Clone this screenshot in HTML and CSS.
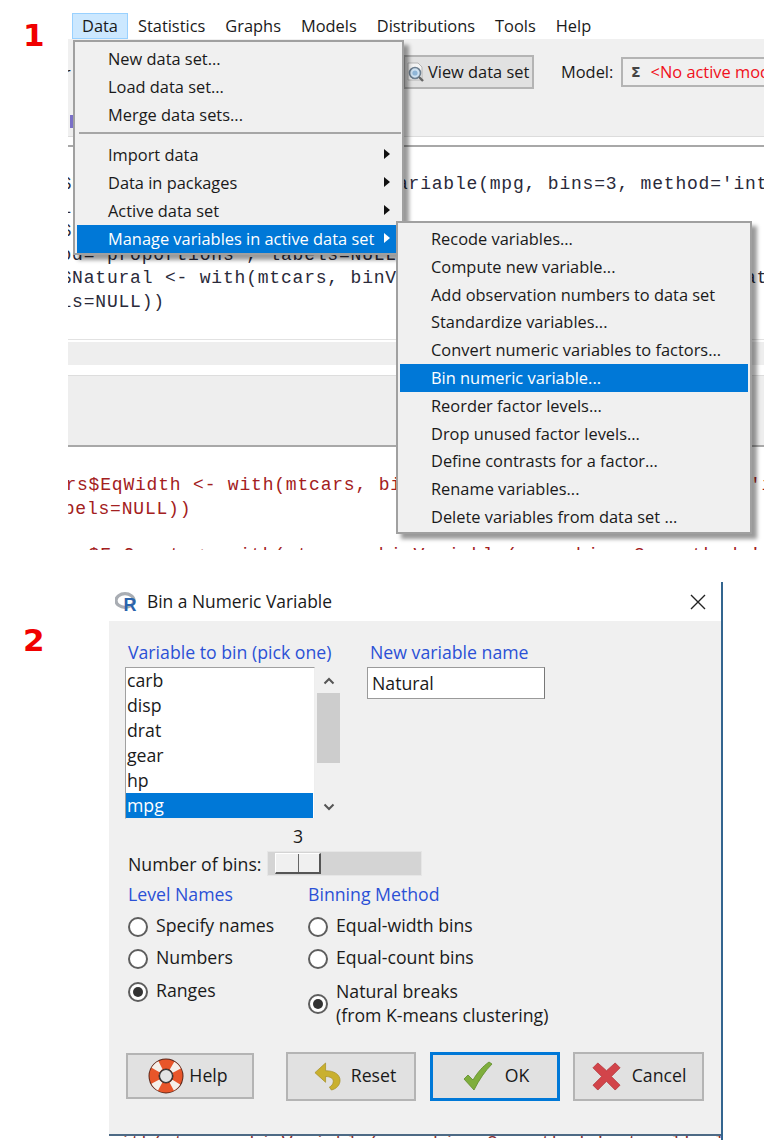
FILE: index.html
```html
<!DOCTYPE html>
<html lang="en">
<head>
<meta charset="utf-8">
<title>Bin a Numeric Variable</title>
<link rel="stylesheet" href="styles.css">
</head>
<body>
<section class="shot">
  <div class="gutter"><div class="numeral">1</div></div>
  <div class="app">
    <nav class="menubar">
      <span class="top active">Data</span>
      <span class="top">Statistics</span>
      <span class="top">Graphs</span>
      <span class="top">Models</span>
      <span class="top">Distributions</span>
      <span class="top">Tools</span>
      <span class="top">Help</span>
    </nav>
    <div class="toolbar">
      <div class="tool-row">
        <span class="cut-label">r</span>
        <button class="view-btn">
          <svg class="view-icon" viewBox="0 0 20 24"><path d="M3 3h10l4 4v13H3z" fill="#f4f4f4" stroke="#b5b5b5"/><circle cx="10" cy="13" r="5.5" fill="#cfe2f2" stroke="#6d7f90" stroke-width="1.6"/><circle cx="10" cy="13" r="2.6" fill="#8fb6d8"/><path d="M14 17l4 4" stroke="#666" stroke-width="2.4"/></svg>
          <span class="lift">View data set</span>
        </button>
        <span class="model-label lift">Model:</span>
        <div class="combo">
          <span class="sigma">Σ</span>
          <span class="no-model lift">&lt;No active model&gt;</span>
        </div>
      </div>
      <span class="cut-mark"></span>
    </div>
    <div class="white-gap"></div>
    <div class="pane code-top">
      <div class="line">$EqWidth &lt;- with(mtcars, binVariable(mpg, bins=3, method='intervals',</div>
      <div class="line">ls=NULL))</div>
      <div class="line">$EqCount &lt;- with(mtcars, binVariable(mpg, bins=3, meth</div>
      <div class="line">od='proportions', labels=NULL))</div>
      <div class="line">$Natural &lt;- with(mtcars, binVariable(mpg, bins=3, method='natural',</div>
      <div class="line">ls=NULL))</div>
    </div>
    <div class="strip-thin"></div>
    <div class="strip-white"></div>
    <div class="strip-messages"></div>
    <div class="pane code-bottom">
      <div class="line first">rs$EqWidth &lt;- with(mtcars, binVariable(mpg, bins=3, method='intervals',</div>
      <div class="line second">bels=NULL))</div>
      <div class="line third">rs$EqCount &lt;- with(mtcars, binVariable(mpg, bins=3, method='proportions'</div>
    </div>
  </div>

  <div class="menu data-menu">
    <div class="item">New data set...</div>
    <div class="item">Load data set...</div>
    <div class="item">Merge data sets...</div>
    <div class="sep"></div>
    <div class="item sub">Import data</div>
    <div class="item sub">Data in packages</div>
    <div class="item sub">Active data set</div>
    <div class="item sub selected">Manage variables in active data set</div>
  </div>
  <div class="menu manage-menu">
    <div class="item">Recode variables...</div>
    <div class="item">Compute new variable...</div>
    <div class="item">Add observation numbers to data set</div>
    <div class="item">Standardize variables...</div>
    <div class="item">Convert numeric variables to factors...</div>
    <div class="item selected">Bin numeric variable...</div>
    <div class="item">Reorder factor levels...</div>
    <div class="item">Drop unused factor levels...</div>
    <div class="item">Define contrasts for a factor...</div>
    <div class="item">Rename variables...</div>
    <div class="item">Delete variables from data set ...</div>
  </div>
</section>

<section class="shot-two">
  <div class="gutter-two"><div class="numeral">2</div></div>
  <div class="dialog">
    <header class="titlebar">
      <svg class="r-logo" viewBox="0 0 24 20"><ellipse cx="10" cy="8.500" rx="9" ry="6.800" fill="none" stroke="#a9adb3" stroke-width="3.200"/><text x="8.500" y="19" class="r-letter">R</text></svg>
      <span class="title lift">Bin a Numeric Variable</span>
      <svg class="close" viewBox="0 0 16 16"><path d="M1 1l14 14M15 1L1 15" stroke="#222" stroke-width="1.4"/></svg>
    </header>
    <div class="body">
      <div class="top-row">
        <div class="list-col">
          <div class="group-title indent">Variable to bin (pick one)</div>
          <div class="list-wrap">
            <ul class="list">
              <li>carb</li><li>disp</li><li>drat</li><li>gear</li><li>hp</li><li class="on">mpg</li>
            </ul>
            <div class="scroll">
              <svg class="arrow" viewBox="0 0 12 8"><path d="M1.5 6.5L6 2l4.500 4.500" fill="none" stroke="#555" stroke-width="2"/></svg>
              <div class="thumb"></div>
              <svg class="arrow low" viewBox="0 0 12 8"><path d="M1.500 1.500L6 6l4.500-4.500" fill="none" stroke="#555" stroke-width="2"/></svg>
            </div>
          </div>
        </div>
        <div class="name-col">
          <div class="group-title indent">New variable name</div>
          <div class="entry">Natural</div>
        </div>
      </div>
      <div class="slider-value">3</div>
      <div class="slider-row">
        <span class="slider-label">Number of bins:</span>
        <div class="trough"><div class="slider-thumb"><i></i></div></div>
      </div>
      <div class="options">
        <div class="opt-col left-col">
          <div class="group-title">Level Names</div>
          <div class="radio-row"><span class="radio"></span>Specify names</div>
          <div class="radio-row"><span class="radio"></span>Numbers</div>
          <div class="radio-row"><span class="radio on"></span>Ranges</div>
        </div>
        <div class="opt-col">
          <div class="group-title">Binning Method</div>
          <div class="radio-row"><span class="radio"></span>Equal-width bins</div>
          <div class="radio-row"><span class="radio"></span>Equal-count bins</div>
          <div class="radio-row tall"><span class="radio on"></span><span class="lift">Natural breaks<br>(from K-means clustering)</span></div>
        </div>
      </div>
      <div class="buttons">
        <button class="btn help">
          <svg class="ico buoy" viewBox="0 0 36 36"><circle cx="18" cy="18" r="12" fill="none" stroke="#5a2a1e" stroke-width="11"/><circle cx="18" cy="18" r="12" fill="none" stroke="#e8562a" stroke-width="9"/><circle cx="18" cy="18" r="12" fill="none" stroke="#f4f0ea" stroke-width="9" stroke-dasharray="7 11.85" stroke-dashoffset="3.500" transform="rotate(45 18 18)"/><circle cx="18" cy="18" r="6.500" fill="#e4e4e4" stroke="#333" stroke-width="1.200"/></svg>
          <span class="lift">Help</span>
        </button>
        <button class="btn reset">
          <svg class="ico undo" viewBox="0 0 28 30"><path d="M12 1L1 11l11 10v-6c5 0 8 2 8 5 0 3-2 5-4 6l2 3c5-1 9-5 9-10 0-6-6-10-15-10z" fill="#c9b02e" stroke="#a8922a" stroke-width=".8"/></svg>
          <span class="lift">Reset</span>
        </button>
        <button class="btn ok">
          <svg class="ico check" viewBox="0 0 30 30"><path d="M1 18l4-4 5 5C14 12 20 5 26 1l3 2C22 10 16 19 11 29z" fill="#7fae3c" stroke="#5e8c2a" stroke-width=".8"/></svg>
          <span class="lift">OK</span>
        </button>
        <button class="btn cancel">
          <svg class="ico cross" viewBox="0 0 30 30"><path d="M6 1l9 8 9-8 5 5-9 9 9 9-5 5-9-9-9 9-5-5 9-9-9-9z" fill="#d2444a" stroke="#b23238" stroke-width=".8"/></svg>
          <span class="lift">Cancel</span>
        </button>
      </div>
    </div>
    <div class="under">with(mtcars, binVariable(mpg, bins=3, method='natural', labels=NULL))</div>
  </div>
</section>
</body>
</html>
```
FILE: styles.css
```css
* { box-sizing: border-box; }
html, body { margin: 0; padding: 0; }
body {
  width: 764px;
  height: 1140px;
  overflow: hidden;
  background: #fff;
  font-family: "Open Sans", "Noto Sans", sans-serif;
  font-size: 16.400px;
  color: #1a1a1a;
}
button { font: inherit; color: inherit; }
.lift { margin-bottom: 2px; }

.shot { position: relative; display: flex; height: 582px; }
.gutter { width: 68px; flex: none; padding: 14px 0 0 23px; }
.numeral {
  font-family: "DejaVu Sans", sans-serif;
  font-weight: 700;
  font-size: 31px;
  line-height: 42px;
  color: #f00000;
}
.app { flex: 1; min-width: 0; overflow: hidden; display: flex; flex-direction: column; height: 550px; }

.menubar { height: 39px; padding: 13px 0 0 4px; display: flex; }
.top { height: 26px; line-height: 24px; padding: 0 9px; white-space: nowrap; border: 1px solid transparent; }
.top.active { background: #cce8ff; border-color: #99d1ff; }

.toolbar { height: 98px; background: #f0f0f0; border-bottom: 1px solid #dcdcdc; padding-top: 16px; position: relative; }
.tool-row { display: flex; align-items: center; height: 34px; }
.cut-label { width: 339px; margin-left: -4px; flex: none; }
.view-btn {
  width: 131px; height: 34px; flex: none;
  background: #e1e1e1; border: 2px solid #b4b4b4;
  display: flex; align-items: center; gap: 3px; padding: 0;
  white-space: nowrap;
}
.view-icon { width: 20px; height: 24px; flex: none; }
.model-label { margin-left: 27px; width: 60px; flex: none; }
.combo {
  height: 30px; flex: 1; min-width: 160px; margin-right: -40px;
  border: 2px solid #b4b4b4; background: #f0f0f0;
  display: flex; align-items: center; gap: 10px; padding-left: 8px; white-space: nowrap;
}
.sigma { font-family: "DejaVu Sans", sans-serif; font-weight: 700; font-size: 14px; color: #444; }
.no-model { color: #f01020; }
.cut-mark { display: block; width: 3px; height: 13px; background: #7a70c8; margin: 26px 0 0 2px; }

.white-gap { height: 10px; border-bottom: 2px solid #a8a8a8; background: #fff; flex: none; }

.pane { font-family: "Liberation Mono", monospace; font-size: 18px; letter-spacing: .8px; overflow: hidden; flex: none; }
.line { height: 23.600px; line-height: 23.600px; margin-left: -7.500px; white-space: pre; }
.code-top { height: 192px; padding-top: 26px; color: #2a2a3a; }
.strip-thin {
  height: 26px; flex: none; padding-top: 2px;
  border-top: 1px solid #e2e2e2; background: #eee; background-clip: content-box;
}
.strip-white { height: 10px; flex: none; background: #fff; }
.strip-messages { height: 72px; flex: none; background: #eee; border-top: 1px solid #ddd; border-bottom: 2px solid #a8a8a8; }
.code-bottom { flex: 1; padding-top: 27px; color: #a32020; }
.code-bottom .first { margin-left: -2.600px; }
.code-bottom .second { margin-left: -4.300px; }
.code-bottom .third { margin-left: -2.600px; margin-top: 23px; }

.menu {
  position: absolute;
  background: #f0f0f0;
  border: 2px solid #a0a0a0;
  box-shadow: 5px 5px 4px rgba(0,0,0,.4);
  padding: 2px;
}
.data-menu { left: 73px; top: 40px; width: 331px; height: 215px; z-index: 1; padding-top: 3px; }
.manage-menu { left: 396px; top: 221px; width: 356px; height: 313px; z-index: 2; }
.item { height: 28px; line-height: 27px; padding-left: 31px; position: relative; white-space: nowrap; }
.manage-menu .item { height: 27.800px; }
.item.selected { background: #0078d7; color: #fff; }
.sub::after {
  content: ""; position: absolute; right: 10px; top: 8px;
  border-left: 6px solid #111; border-top: 5px solid transparent; border-bottom: 5px solid transparent;
}
.sub.selected::after { border-left-color: #fff; }
.sep { height: 2px; background: #a6a6a6; margin: 3px 0 7px 2px; width: 322px; }

.shot-two { display: flex; font-size: 17.700px; }
.gutter-two { width: 109px; flex: none; padding: 37px 0 0 23px; }
.dialog { width: 614px; border-right: 2px solid #33658f; height: 558px; }
.titlebar { height: 39px; display: flex; align-items: center; background: #fff; padding-left: 6px; position: relative; }
.r-logo { width: 24px; height: 20px; flex: none; }
.r-letter { font-family: "Liberation Sans", sans-serif; font-weight: 700; font-size: 18px; fill: #2a63ad; }
.title { margin-left: 8px; font-size: 17.400px; }
.close { width: 16px; height: 16px; margin-left: auto; margin-right: 15px; }

.body { height: 515px; background: #f0f0f0; padding: 21px 0 0 16px; border-bottom: 2px solid #4d6a85; }
.group-title { color: #2b50d6; height: 20px; line-height: 20px; white-space: nowrap; }
.group-title.indent { margin-left: 3px; }
.top-row { display: flex; }
.list-col { width: 242px; flex: none; }
.list-wrap { display: flex; margin-top: 5px; }
.list {
  list-style: none; margin: 0; padding: 0;
  width: 190px; height: 152px;
  background: #fff; border: 1px solid #a0a0a0; border-right-color: #eee; border-bottom-color: #eee;
}
.list li { height: 25px; line-height: 25px; padding-left: 1px; }
.list li.on { background: #0078d7; color: #fff; margin-right: 1px; }
.scroll { width: 23px; height: 152px; margin-left: 2px; display: flex; flex-direction: column; align-items: center; position: relative; }
.arrow { width: 12px; height: 8px; margin-top: 10px; flex: none; }
.arrow.low { margin-top: 40px; }
.thumb { width: 23px; height: 70px; background: #cdcdcd; margin-top: 8px; flex: none; }
.name-col .entry {
  width: 178px; height: 32px; margin-top: 5px; padding-left: 4px; line-height: 30px;
  background: #fff; border: 1px solid #9a9a9a; border-right-color: #777;
}
.slider-value { height: 20px; line-height: 20px; margin: 7px 0 0 168px; }
.slider-row { display: flex; align-items: center; margin: 5px 0 0 3px; height: 25px; }
.slider-label { width: 139px; white-space: nowrap; flex: none; }
.trough { width: 155px; height: 25px; background: #d4d4d4; border: 1px solid #e6e6e6; padding: 1px 0 0 7px; }
.slider-thumb {
  width: 46px; height: 21px; background: #f0f0f0;
  border-left: 1px solid #fff; border-top: 1px solid #fff;
  border-right: 2px solid #555; border-bottom: 2px solid #555;
  position: relative;
}
.slider-thumb i { position: absolute; left: 22px; top: 0; bottom: 0; width: 1px; background: #666; }

.options { display: flex; margin: 8px 0 0 3px; }
.opt-col { width: 180px; flex: none; }
.opt-col + .opt-col { width: 300px; }
.radio-row { height: 20px; line-height: 16px; display: flex; align-items: flex-start; gap: 8px; margin-top: 12.500px; white-space: nowrap; }
.radio { width: 20px; height: 20px; border: 2px solid #5e5e5e; border-radius: 50%; background: #fff; flex: none; position: relative; }
.radio.on::after { content: ""; position: absolute; inset: 3px; border-radius: 50%; background: #333; }
.radio-row.tall { height: 44px; line-height: 24px; align-items: center; }

.buttons { display: flex; align-items: center; margin-top: 26px; padding-left: 1px; }
.btn {
  height: 49px; background: #e1e1e1; border: 2px solid #b4b4b4;
  display: flex; align-items: center; justify-content: center; padding: 0; white-space: nowrap; flex: none;
}
.help { width: 128px; height: 46px; margin-right: 32px; gap: 5px; padding-right: 4px; }
.reset { width: 130px; margin-right: 14px; gap: 10px; padding-left: 8px; }
.ok { width: 130px; margin-right: 13px; border: 3px solid #0078d7; gap: 12px; padding-left: 2px; }
.cancel { width: 131px; gap: 10px; }
.buoy { width: 36px; height: 36px; }
.undo { width: 27px; height: 29px; }
.check { width: 30px; height: 30px; }
.cross { width: 31px; height: 29px; }
.under {
  height: 2px; overflow: hidden; white-space: pre;
  font-family: "Liberation Mono", monospace; font-size: 18px; line-height: 14px; color: #8a3030;
}
```
